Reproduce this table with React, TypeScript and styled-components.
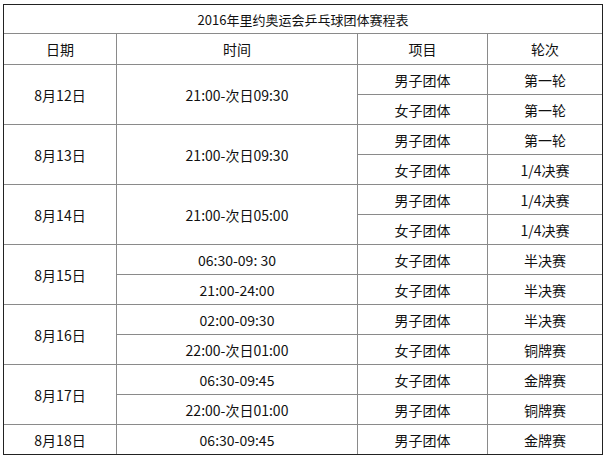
import styled, { createGlobalStyle } from 'styled-components';

const GlobalStyle = createGlobalStyle`
	html, body {
		margin: 0;
		padding: 0;
		background: #ffffff;
	}
	body {
		font-family: "Noto Sans CJK SC", "Liberation Sans", sans-serif;
		color: #111111;
	}
`;

const Page = styled.div`
	padding: 4px 0 0 3px;
`;

const Schedule = styled.div`
	display: grid;
	grid-template-columns: 112px 240px 129px 114px;
	grid-template-rows: 28px 30px repeat(13, 29px);
	gap: 1px;
	width: 598px;
	background: #8a8a8a;
	border: 1px solid #222222;
`;

const Cell = styled.div<{ $span?: number }>`
	display: flex;
	align-items: center;
	justify-content: center;
	background: #ffffff;
	font-size: 14px;
	line-height: 1;
	white-space: nowrap;
	grid-row: ${ ({ $span }) => $span ? `span ${ $span }` : 'auto' };
`;

const Title = styled(Cell)`
	grid-column: 1 / -1;
	font-size: 13px;
`;

type Match = { event: string; round: string };
type Day = { date: string; times: string[]; matches: Match[] };

const days: Day[] = [
	{ date: '8月12日', times: ['21:00-次日09:30'], matches: [{ event: '男子团体', round: '第一轮' }, { event: '女子团体', round: '第一轮' }] },
	{ date: '8月13日', times: ['21:00-次日09:30'], matches: [{ event: '男子团体', round: '第一轮' }, { event: '女子团体', round: '1/4决赛' }] },
	{ date: '8月14日', times: ['21:00-次日05:00'], matches: [{ event: '男子团体', round: '1/4决赛' }, { event: '女子团体', round: '1/4决赛' }] },
	{ date: '8月15日', times: ['06:30-09: 30', '21:00-24:00'], matches: [{ event: '女子团体', round: '半决赛' }, { event: '女子团体', round: '半决赛' }] },
	{ date: '8月16日', times: ['02:00-09:30', '22:00-次日01:00'], matches: [{ event: '男子团体', round: '半决赛' }, { event: '女子团体', round: '铜牌赛' }] },
	{ date: '8月17日', times: ['06:30-09:45', '22:00-次日01:00'], matches: [{ event: '女子团体', round: '金牌赛' }, { event: '男子团体', round: '铜牌赛' }] },
	{ date: '8月18日', times: ['06:30-09:45'], matches: [{ event: '男子团体', round: '金牌赛' }] },
];

const App = () => {
	return (
		<>
			<GlobalStyle />
			<Page>
				<Schedule>
					<Title>2016年里约奥运会乒乓球团体赛程表</Title>
					<Cell>日期</Cell>
					<Cell>时间</Cell>
					<Cell>项目</Cell>
					<Cell>轮次</Cell>
					{
						days.map((day) => day.matches.map((match, index) => {
							const span = day.matches.length;
							const sharedTime = day.times.length === 1;
							return [
								index === 0 && <Cell key={ `${ day.date }-d` } $span={ span }>{ day.date }</Cell>,
								sharedTime
									? index === 0 && <Cell key={ `${ day.date }-t` } $span={ span }>{ day.times[0] }</Cell>
									: <Cell key={ `${ day.date }-t${ index }` }>{ day.times[index] }</Cell>,
								<Cell key={ `${ day.date }-e${ index }` }>{ match.event }</Cell>,
								<Cell key={ `${ day.date }-r${ index }` }>{ match.round }</Cell>,
							];
						}))
					}
				</Schedule>
			</Page>
		</>
	);
};

export default App;
